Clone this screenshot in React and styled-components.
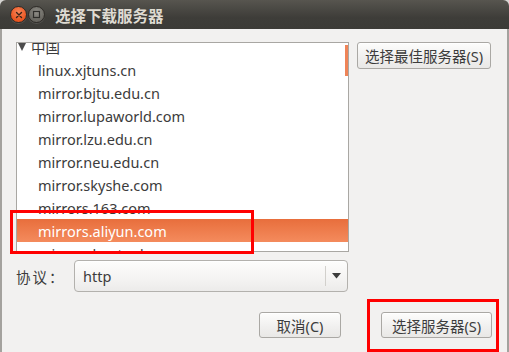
import React from "react";
import styled, { createGlobalStyle } from "styled-components";

const GlobalStyle = createGlobalStyle`
  html, body {
    margin: 0;
    padding: 0;
    background: #d6d5d2;
  }
  * { box-sizing: border-box; }
`;

const FONT = `"Noto Sans", "Noto Sans CJK SC", sans-serif`;

const mirrors = [
  "linux.xjtuns.cn",
  "mirror.bjtu.edu.cn",
  "mirror.lupaworld.com",
  "mirror.lzu.edu.cn",
  "mirror.neu.edu.cn",
  "mirror.skyshe.com",
  "mirrors.163.com",
  "mirrors.aliyun.com",
  "mirrors.hust.edu.cn",
];

const App = () => {
  return (
    <>
      <GlobalStyle />
      <Window>
        <TitleBar>
          <CloseBtn>
            <svg width="8" height="8" viewBox="0 0 8 8">
              <path d="M1.5 1.5 L6.5 6.5 M6.5 1.5 L1.5 6.5" stroke="#3a2418" strokeWidth="1.4" strokeLinecap="round" />
            </svg>
          </CloseBtn>
          <MaxBtn>
            <svg width="9" height="9" viewBox="0 0 9 9">
              <rect x="1.5" y="1.5" width="6" height="6" fill="none" stroke="#2e2d2a" strokeWidth="1.2" />
            </svg>
          </MaxBtn>
          <Title>选择下载服务器</Title>
        </TitleBar>

        <Body>
          <TopRow>
            <ListBox>
              <ListInner>
                <GroupRow>
                  <Expander />
                  中国
                </GroupRow>
                {mirrors.map((m) => (
                  <Row key={m} selected={m === "mirrors.aliyun.com"}>
                    {m}
                  </Row>
                ))}
              </ListInner>
              <ScrollThumb />
            </ListBox>
            <Button width={134}>选择最佳服务器(S)</Button>
          </TopRow>

          <ProtoRow>
            <Label>协议：</Label>
            <Combo>
              <ComboText>http</ComboText>
              <ComboArrow>
                <svg width="9" height="6" viewBox="0 0 9 6">
                  <path d="M0 0 L9 0 L4.5 5.5 Z" fill="#3c3c3c" />
                </svg>
              </ComboArrow>
            </Combo>
          </ProtoRow>

          <ButtonRow>
            <Button width={82}>取消(C)</Button>
            <Button width={111}>选择服务器(S)</Button>
          </ButtonRow>
        </Body>

        <Mark top={210} left={10} width={244} height={44} />
        <Mark top={299} left={367} width={132} height={53} />
      </Window>
    </>
  );
};

const Window = styled.div`
  position: relative;
  width: 509px;
  height: 352px;
  display: flex;
  flex-direction: column;
  border-radius: 6px 6px 0 0;
  overflow: hidden;
  font-family: ${FONT};
`;

const TitleBar = styled.div`
  height: 29px;
  flex: none;
  display: flex;
  align-items: center;
  padding: 0 0 0 10px;
  gap: 1px;
  background: linear-gradient(#57554f, #3e3d39 60%, #3c3b37);
`;

const CloseBtn = styled.div`
  width: 17px;
  height: 17px;
  border-radius: 50%;
  display: flex;
  align-items: center;
  justify-content: center;
  background: radial-gradient(circle at 50% 35%, #f8865a, #e9541f 70%);
  border: 1px solid #2f2c28;
  box-shadow: 0 1px 0 rgba(255, 255, 255, 0.12);
`;

const MaxBtn = styled(CloseBtn)`
  background: radial-gradient(circle at 50% 35%, #8f8d87, #67655f 70%);
`;

const Title = styled.div`
  margin-left: 9px;
  color: #dfdbd2;
  font-size: 15.5px;
  font-weight: bold;
  font-family: "Noto Sans CJK SC", sans-serif;
`;

const Body = styled.div`
  flex: 1;
  background: #f2f1f0;
  border-left: 2px solid #a4a29e;
  border-right: 2px solid #a4a29e;
  padding: 13px 15px 0 14px;
  display: flex;
  flex-direction: column;
`;

const TopRow = styled.div`
  display: flex;
  align-items: flex-start;
  gap: 8px;
`;

const ListBox = styled.div`
  position: relative;
  width: 333px;
  height: 210px;
  background: #ffffff;
  border: 1px solid #a9a7a3;
  overflow: hidden;
`;

const ListInner = styled.div`
  margin-top: -8px;
  display: flex;
  flex-direction: column;
`;

const GroupRow = styled.div`
  height: 23px;
  display: flex;
  align-items: center;
  gap: 5px;
  padding-left: 1px;
  color: #3c3c3c;
  font-size: 14.5px;
  font-family: "Noto Sans CJK SC", sans-serif;
`;

const Expander = styled.span`
  width: 0;
  height: 0;
  border-left: 4.5px solid transparent;
  border-right: 4.5px solid transparent;
  border-top: 8px solid #4c4c4c;
`;

const Row = styled.div`
  height: 23px;
  display: flex;
  align-items: center;
  padding-left: 21px;
  font-size: 14.5px;
  color: ${({ selected }) => (selected ? "#ffffff" : "#3c3c3c")};
  background: ${({ selected }) =>
    selected ? "linear-gradient(#e86e3c, #f48b5d)" : "transparent"};
`;

const ScrollThumb = styled.div`
  position: absolute;
  top: 2px;
  right: 0;
  width: 3px;
  height: 31px;
  background: #ef8458;
`;

const Button = styled.button`
  flex: none;
  width: ${({ width }) => (width ? `${width}px` : "auto")};
  height: 27px;
  padding: 0 4px;
  border: 1px solid #aaa8a4;
  border-radius: 3px;
  background: linear-gradient(#fdfdfc, #f0efee 60%, #e9e8e6);
  box-shadow: inset 0 1px 0 #ffffff;
  color: #3c3c3c;
  font-family: ${FONT};
  font-size: 14.5px;
  white-space: nowrap;
`;

const ProtoRow = styled.div`
  margin-top: 8px;
  display: flex;
  align-items: center;
`;

const Label = styled.div`
  width: 58px;
  color: #3c3c3c;
  font-size: 14.5px;
  letter-spacing: 2px;
  font-family: "Noto Sans CJK SC", sans-serif;
`;

const Combo = styled.div`
  width: 274px;
  height: 32px;
  display: flex;
  align-items: center;
  border: 1px solid #b3b1ad;
  border-radius: 4px;
  background: linear-gradient(#fdfdfc, #f4f3f2 60%, #ecebea);
  box-shadow: inset 0 1px 0 #ffffff;
`;

const ComboText = styled.div`
  flex: 1;
  padding-left: 8px;
  color: #3c3c3c;
  font-size: 14.5px;
`;

const ComboArrow = styled.div`
  width: 22px;
  height: 20px;
  border-left: 1px solid #d2d0cc;
  display: flex;
  align-items: center;
  justify-content: center;
`;

const ButtonRow = styled.div`
  margin-top: 20px;
  display: flex;
  justify-content: flex-end;
  gap: 40px;
  button {
    height: 26px;
  }
`;

const Mark = styled.div`
  position: absolute;
  top: ${({ top }) => top}px;
  left: ${({ left }) => left}px;
  width: ${({ width }) => width}px;
  height: ${({ height }) => height}px;
  border: 3px solid #ff0000;
  pointer-events: none;
`;

export default App;
